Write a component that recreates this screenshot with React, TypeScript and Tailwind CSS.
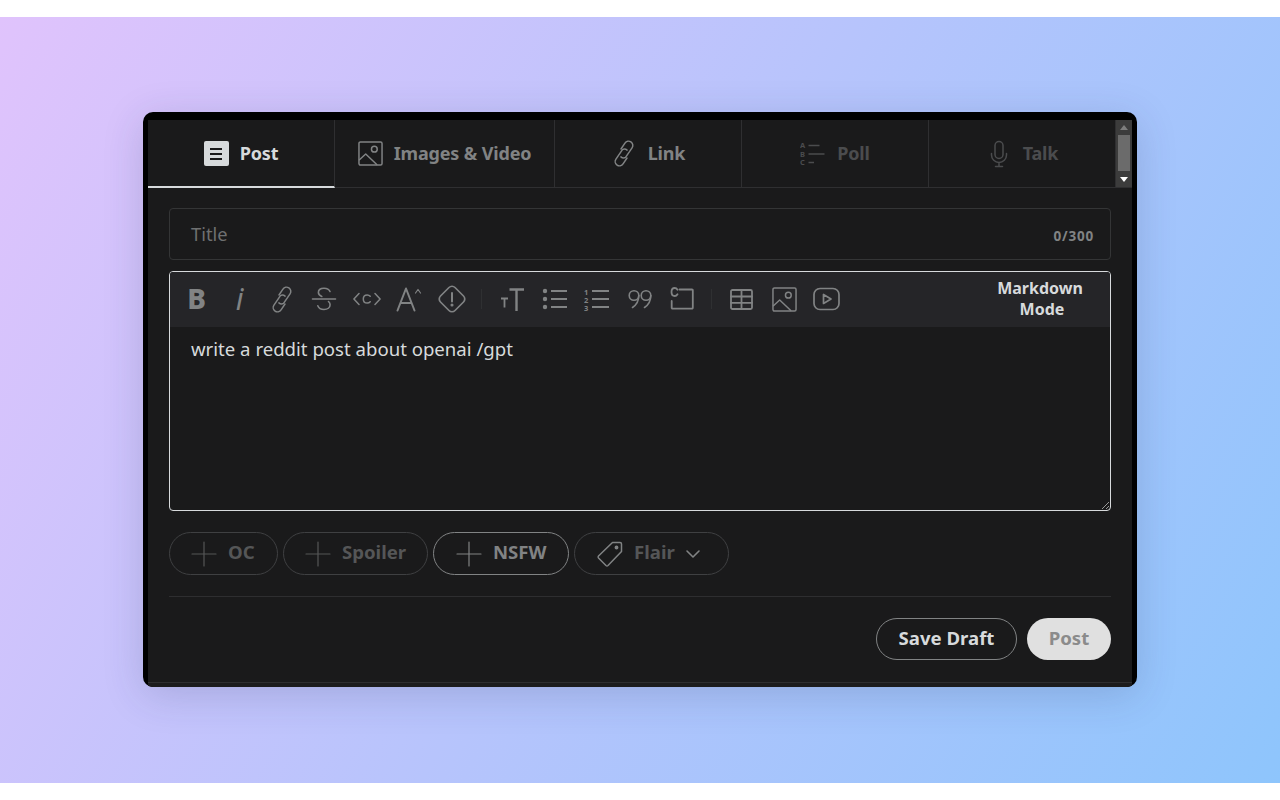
import React from "react";

const S = ({ w = 24, h = 24, vb = "0 0 24 24", sw = 1.6, children }: { w?: number; h?: number; vb?: string; sw?: number; children: React.ReactNode }) => (
  <svg width={w} height={h} viewBox={vb} fill="none" stroke="currentColor" strokeWidth={sw} strokeLinecap="round" strokeLinejoin="round" className="shrink-0">
    {children}
  </svg>
);

const ChainIcon = () => (
  <S w={26} h={27} vb="-3 0 26 27" sw={1.5}>
    <path d="M7 9 10.950 3.070A4.300 4.300 0 0 1 18.050 7.930L11.550 17.430A4.300 4.300 0 0 1 6.900 16.900" />
    <path d="M13 18 9.050 23.930A4.300 4.300 0 0 1 1.950 19.070L8.450 9.570A4.300 4.300 0 0 1 13.100 10.100" />
  </S>
);

const ImageIcon = () => (
  <S w={25} h={25} vb="0 0 26 26" sw={1.55}>
    <rect x="1" y="1" width="24" height="24" rx="1.5" />
    <circle cx="17" cy="8.5" r="3" />
    <path d="M1.5 19.5 8 13.5 19.5 24.5" />
  </S>
);

const Tab = ({ children, label, cls, w, active }: { children: React.ReactNode; label: string; cls: string; w: string; active?: boolean }) => (
  <div className={`${w} h-full flex items-center justify-center gap-[11px] border-r border-r-[#2f2f31] border-b ${active ? "border-b-2 border-b-[#d7dadc] pt-[1px]" : "border-b-[#2f2f31]"} ${cls}`}>
    {children}
    <span className="text-[18px] font-bold leading-none tracking-[-0.15px] pb-[2px]">{label}</span>
  </div>
);

const Tool = ({ children }: { children: React.ReactNode }) => (
  <div className="w-[42.4px] h-full flex items-center justify-center shrink-0">{children}</div>
);

const Sep = ({ cls }: { cls: string }) => <div className={`w-px h-[20px] bg-[#2f3032] shrink-0 ${cls}`} />;

const Plus = () => (
  <S w={26} h={26} vb="0 0 26 26" sw={1.2}>
    <path d="M13 1v24M1 13h24" />
  </S>
);

const Chip = ({ children, label, w, cls }: { children: React.ReactNode; label: string; w: string; cls: string }) => (
  <div className={`${w} h-[43px] rounded-full border flex items-center gap-[11px] ${cls}`}>
    {children}
    <span className="text-[18.6px] font-bold leading-none pb-[3px]">{label}</span>
  </div>
);

export default function App() {
  return (
    <div className="w-full h-[800px] bg-white py-[17px] font-['Noto_Sans',sans-serif]">
      <div className="h-[766px] w-full bg-[linear-gradient(120deg,#e0c3fc,#8ec5fc)] flex justify-center pt-[95px]">
        <div className="w-[994px] h-[575px] rounded-[10px] bg-black pt-[8px] px-[5px] shadow-[0_8px_40px_rgba(40,50,90,0.18)] flex flex-col overflow-hidden">
          <div className="flex-1 flex flex-col bg-[#1a1a1b] min-h-0">
            <div className="h-[68px] flex shrink-0">
              <Tab w="w-[187px]" label="Post" cls="text-[#d7dadc]" active>
                <div className="w-[25px] h-[25px] rounded-[2px] bg-[#d7dadc] flex flex-col items-center justify-center gap-[3px]">
                  <div className="w-[12px] h-[2px] bg-[#1a1a1b]" />
                  <div className="w-[12px] h-[2px] bg-[#1a1a1b]" />
                  <div className="w-[12px] h-[2px] bg-[#1a1a1b]" />
                </div>
              </Tab>
              <Tab w="w-[220px]" label="Images & Video" cls="text-[#818384]">
                <ImageIcon />
              </Tab>
              <Tab w="w-[187px]" label="Link" cls="text-[#818384]">
                <ChainIcon />
              </Tab>
              <Tab w="w-[187px]" label="Poll" cls="text-[#4b4c4e]">
                <svg width="26" height="26" viewBox="0 0 26 26" fill="none" stroke="currentColor" strokeWidth="1.5" className="shrink-0">
                  <path d="M8.500 4.500h11M8.500 13h16M8.500 21.500h5.500" />
                  <text x="0" y="7.300" fontSize="7.500" fontWeight="700" fill="currentColor" stroke="none">A</text>
                  <text x="0" y="15.800" fontSize="7.500" fontWeight="700" fill="currentColor" stroke="none">B</text>
                  <text x="0" y="24.300" fontSize="7.500" fontWeight="700" fill="currentColor" stroke="none">C</text>
                </svg>
              </Tab>
              <Tab w="w-[187px]" label="Talk" cls="text-[#4b4c4e]">
                <S w={26} h={28} vb="0 0 26 28" sw={1.5}>
                  <rect x="9" y="1.5" width="8" height="17" rx="4" />
                  <path d="M5.5 13.5v1.5c0 4.1 3.4 7.5 7.5 7.5s7.5-3.4 7.5-7.500v-1.500M13 22.500v4M9.500 26.500h7" />
                </S>
              </Tab>
              <div className="w-[16px] h-full bg-[#3c3c3c] flex flex-col items-center shrink-0 border-b border-b-[#2f2f31]">
                <div className="h-[15px] flex items-center justify-center shrink-0">
                  <div className="w-0 h-0 border-x-[4px] border-x-transparent border-b-[5px] border-b-[#7d7d7d]" />
                </div>
                <div className="w-[12px] h-[36px] bg-[#6b6b6b] shrink-0" />
                <div className="flex-1 flex items-center justify-center">
                  <div className="w-0 h-0 border-x-[4px] border-x-transparent border-t-[5px] border-t-white" />
                </div>
              </div>
            </div>

            <div className="flex-1 flex flex-col px-[21px] pt-[20px] min-h-0">
              <div className="h-[52px] w-[942px] rounded-[4px] border border-[#343536] flex items-center justify-between pl-[21px] pr-[16px] shrink-0">
                <span className="text-[18.300px] leading-none text-[#6f7071]">Title</span>
                <span className="text-[13.500px] font-bold leading-none text-[#818384] tracking-[0.8px] pt-[5px]">0/300</span>
              </div>

              <div className="mt-[11px] w-[942px] h-[240px] rounded-[4px] border border-[#d7dadc] flex flex-col shrink-0 relative">
                <div className="h-[55px] pb-[1px] bg-[#252528] rounded-t-[3px] flex items-center pl-[6px] text-[#818384] shrink-0 relative">
                  <Tool><span className="text-[28px] font-extrabold leading-none text-[#818384] mr-[1px] pb-[2px]">B</span></Tool>
                  <Tool><span className="text-[30px] italic font-normal leading-none text-[#818384]">i</span></Tool>
                  <Tool><ChainIcon /></Tool>
                  <Tool>
                    <S w={26} h={26} vb="0 0 26 26" sw={1.6}>
                      <path d="M1.5 13h23" />
                      <path d="M19 5.500C18 3 15.500 2.200 13 2.200c-3.200 0-5.600 1.500-5.600 4.300 0 2 1.400 3.200 3.400 4" />
                      <path d="M17.500 15.500c1 .9 1.600 1.900 1.600 3.200 0 3-2.700 4.800-6.100 4.800-3 0-5.300-1.300-6.200-3.700" />
                    </S>
                  </Tool>
                  <Tool>
                    <S w={28} h={18} vb="0 0 28 18" sw={1.5}>
                      <path d="M6 3.500.9 9 6 14.500M22 3.500 27.100 9 22 14.500" />
                      <path d="M17.200 6.300c-.8-1-1.800-1.400-3-1.400-2.300 0-3.900 1.700-3.900 4.100s1.600 4.100 3.900 4.100c1.200 0 2.200-.4 3-1.400" />
                    </S>
                  </Tool>
                  <Tool>
                    <S w={26} h={26} vb="0 0 26 26" sw={2}>
                      <path d="M1.500 24.500 10 2.500 18.500 24.500M4.800 17h10.400" />
                      <path d="M19.500 7 22 3.500 24.500 7" strokeWidth="1.200" />
                    </S>
                  </Tool>
                  <Tool>
                    <S w={28} h={28} vb="0 0 28 28" sw={1.7}>
                      <path d="M11 2.500 2.500 11a4.200 4.200 0 0 0 0 6L11 25.500a4.200 4.200 0 0 0 6 0l8.500-8.500a4.200 4.200 0 0 0 0-6L17 2.500a4.200 4.200 0 0 0-6 0Z" />
                      <path d="M14 8v8.500" strokeWidth="2" />
                      <circle cx="14" cy="20" r=".7" fill="currentColor" />
                    </S>
                  </Tool>
                  <Sep cls="ml-[8px] mr-[9.500px]" />
                  <Tool>
                    <svg width="26" height="26" viewBox="0 0 26 26" fill="none" stroke="currentColor" strokeWidth="2.400" className="shrink-0">
                      <path d="M10.500 3.500h14.500M17.500 3.500v21.500" />
                      <path d="M2 12.500h7M5.500 12.500v9" strokeWidth="1.800" />
                    </svg>
                  </Tool>
                  <Tool>
                    <svg width="26" height="22" viewBox="0 0 26 22" fill="currentColor" stroke="none" className="shrink-0">
                      <circle cx="3" cy="3" r="2.200" />
                      <circle cx="3" cy="11" r="2.200" />
                      <circle cx="3" cy="19" r="2.200" />
                      <rect x="9" y="2" width="16" height="2" />
                      <rect x="9" y="10" width="16" height="2" />
                      <rect x="9" y="18" width="16" height="2" />
                    </svg>
                  </Tool>
                  <Tool>
                    <svg width="26" height="24" viewBox="0 0 26 24" fill="currentColor" stroke="none" className="shrink-0">
                      <text x="0" y="7.500" fontSize="7.500" fontWeight="700">1</text>
                      <text x="0" y="15.500" fontSize="7.500" fontWeight="700">2</text>
                      <text x="0" y="23.500" fontSize="7.500" fontWeight="700">3</text>
                      <rect x="8" y="3" width="17" height="2" />
                      <rect x="8" y="11" width="17" height="2" />
                      <rect x="8" y="19" width="17" height="2" />
                    </svg>
                  </Tool>
                  <Tool>
                    <S w={24} h={20} vb="0 0 24 20" sw={1.6}>
                      <circle cx="6" cy="6.500" r="4.800" />
                      <path d="M10.800 6.500c0 5-2.500 9.500-6.300 12" />
                      <circle cx="18" cy="6.500" r="4.800" />
                      <path d="M22.800 6.500c0 5-2.500 9.500-6.300 12" />
                    </S>
                  </Tool>
                  <Tool>
                    <S w={24} h={24} vb="0 0 24 24" sw={1.8}>
                      <path d="M9.500 2.500h12.500a.8.800 0 0 1 .8.800v17.500a.8.800 0 0 1-.8.800H2.500a.8.800 0 0 1-.8-.800v-6.800" />
                      <path d="M7.500 2.800C6.800 1.600 5.800 1 4.700 1 2.800 1 1.500 2.700 1.500 5s1.300 4 3.200 4c1.100 0 2.100-.6 2.800-1.800" />
                    </S>
                  </Tool>
                  <Sep cls="ml-[8px] mr-[8.500px]" />
                  <Tool>
                    <S w={23} h={21} vb="0 0 23 21" sw={1.8}>
                      <rect x="1" y="1" width="21" height="19" rx="1.500" />
                      <path d="M1 7.500h21M1 13.800h21M11.500 1V20" />
                    </S>
                  </Tool>
                  <Tool><ImageIcon /></Tool>
                  <Tool>
                    <S w={27} h={24} vb="0 0 27 24" sw={1.700}>
                      <rect x="1" y="1.500" width="25" height="21" rx="6" />
                      <path d="M10.500 7.500v9l7.500-4.500-7.500-4.500Z" />
                    </S>
                  </Tool>
                  <div className="ml-auto w-[140px] text-center text-[16px] font-bold leading-[21px] text-[#d7dadc]">
                    Markdown<br /><span className="pl-[4px]">Mode</span>
                  </div>
                </div>
                <div className="flex-1 pl-[21px] pt-[10px] text-[18.600px] leading-[24px] text-[#d7dadc]">
                  write a reddit post about openai /gpt
                </div>
                <svg width="9" height="9" viewBox="0 0 9 9" className="absolute right-[0px] bottom-[0px] text-[#9a9a9a]" stroke="currentColor" strokeWidth="1">
                  <path d="M8 1 1 8M8 5 5 8" />
                </svg>
              </div>

              <div className="mt-[21px] flex gap-[5px] shrink-0">
                <Chip w="w-[109px] pl-[21px]" label="OC" cls="border-[#3f4042] text-[#555657]"><Plus /></Chip>
                <Chip w="w-[145px] pl-[21px]" label="Spoiler" cls="border-[#3f4042] text-[#555657]"><Plus /></Chip>
                <Chip w="w-[136px] pl-[22px]" label="NSFW" cls="border-[#818384] text-[#818384]"><Plus /></Chip>
                <div className="w-[155px] h-[43px] rounded-full border border-[#3f4042] text-[#555657] flex items-center pl-[21px]">
                  <span className="text-[#818384]">
                    <S w={28} h={28} vb="0 0 28 28" sw={1.5}>
                      <path d="M16.500 2.500h7.500a1.500 1.500 0 0 1 1.500 1.500v7.500L12 25.500a1.500 1.500 0 0 1-2 0l-7.500-7.500a1.500 1.500 0 0 1 0-2Z" />
                      <circle cx="20.500" cy="7.500" r="1.200" fill="currentColor" />
                    </S>
                  </span>
                  <span className="ml-[10px] text-[18.600px] font-bold leading-none pb-[3px]">Flair</span>
                  <span className="ml-[10px] text-[#818384]">
                    <S w={16} h={16} vb="0 0 16 16" sw={1.6}>
                      <path d="M2 5l6 6 6-6" />
                    </S>
                  </span>
                </div>
              </div>

              <div className="mt-[21px] w-[942px] h-px bg-[#2e2e30] shrink-0" />

              <div className="mt-[21px] w-[942px] flex justify-end gap-[10px] shrink-0">
                <div className="w-[141px] h-[42px] rounded-full border border-[#818384] flex items-center justify-center text-[18.600px] font-bold leading-none text-[#d7dadc] pb-[2px]">Save Draft</div>
                <div className="w-[84px] h-[42px] rounded-full bg-[#e0e0e0] flex items-center justify-center text-[18.600px] font-bold leading-none text-[#8b8b8b] pb-[2px]">Post</div>
              </div>
            </div>
            <div className="h-[5px] border-t border-t-[#2e2e30] bg-[#1c1c1d] shrink-0" />
          </div>
        </div>
      </div>
    </div>
  );
}
